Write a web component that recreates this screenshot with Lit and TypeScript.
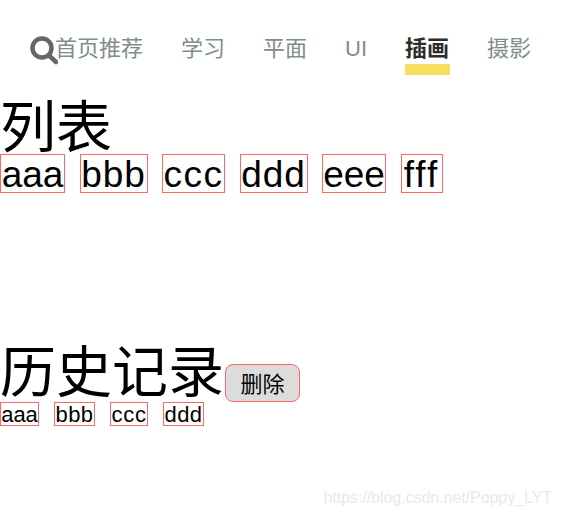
import { LitElement, html, css } from "lit";
import { customElement } from "lit/decorators.js";

const NAV = [
  { t: "首页推荐" },
  { t: "学习" },
  { t: "平面" },
  { t: "UI" },
  { t: "插画", active: true },
  { t: "摄影" },
];
const LIST = ["aaa", "bbb", "ccc", "ddd", "eee", "fff"];
const HIST = ["aaa", "bbb", "ccc", "ddd"];

@customElement("app-root")
export class AppRoot extends LitElement {
  static styles = css`
    :host {
      display: block;
      position: relative;
      width: 562px;
      height: 516px;
      overflow: hidden;
      background: #fff;
      color: #000;
      font-family: "Liberation Sans", "Noto Sans CJK SC", sans-serif;
    }
    .nav {
      display: flex;
      align-items: flex-start;
      padding: 35px 0 0 30px;
      height: 64px;
      box-sizing: border-box;
    }
    .search {
      width: 28px;
      height: 30px;
      flex: none;
      margin-right: -3px;
    }
    .items {
      display: flex;
      gap: 38px;
    }
    .item {
      font-size: 22px;
      line-height: 28px;
      color: #7f8c8d;
      position: relative;
    }
    .item.active {
      color: #2c2c2c;
      font-weight: 700;
    }
    .item.active::after {
      content: "";
      position: absolute;
      left: 0;
      right: -1px;
      top: 29px;
      height: 11px;
      background: #f5df5f;
    }
    h1 {
      margin: 0;
      font-size: 56px;
      font-weight: 400;
    }
    .list-title {
      height: 90px;
      line-height: 52px;
      padding-top: 38px;
      box-sizing: border-box;
    }
    .row {
      display: flex;
    }
    .big .row {
      gap: 14.5px;
    }
    .row.small {
      gap: 15px;
    }
    .box {
      border: 1px solid #f66;
      box-sizing: border-box;
      text-align: center;
      white-space: nowrap;
    }
    .big .box {
      font-size: 37px;
      height: 39px;
      line-height: 39px;
    }
    .list {
      height: 189px;
    }
    .hist-head {
      display: flex;
      align-items: flex-end;
      height: 59px;
    }
    .hist-head h1 {
      line-height: 59px;
      white-space: nowrap;
    }
    button {
      width: 75px;
      height: 38px;
      margin-left: 1px;
      padding: 0 0 3px;
      background: #dcdcdc;
      border: 1px solid #f66;
      border-radius: 8px;
      font: 22px "Noto Sans CJK SC", sans-serif;
      color: #000;
    }
    .small .box {
      font-size: 22px;
      height: 24px;
      line-height: 23px;
    }
    .mark {
      position: absolute;
      right: 10px;
      top: 489px;
      font-size: 16px;
      letter-spacing: -0.05px;
      color: #e9e9e9;
    }
  `;

  render() {
    const bigW: Record<string, number> = { aaa: 65, bbb: 68, ccc: 63, ddd: 68, eee: 64, fff: 42 };
    const smallW: Record<string, number> = { aaa: 39, bbb: 41, ccc: 38, ddd: 41 };
    const ls: Record<string, number> = { ccc: 1.5, eee: 0, fff: 2, bbb: 1, ddd: 1 };
    return html`
      <div class="nav">
        <svg class="search" viewBox="0 0 28 30" aria-hidden="true">
          <circle cx="12" cy="13" r="9.5" fill="none" stroke="#666" stroke-width="4.5"></circle>
          <path d="M19 20.5 L26 27" fill="none" stroke="#666" stroke-width="4.5" stroke-linecap="round"></path>
        </svg>
        <div class="items">
          ${NAV.map(
            (n) => html`<div class="item ${n.active ? "active" : ""}">${n.t}</div>`
          )}
        </div>
      </div>
      <h1 class="list-title">列表</h1>
      <div class="list big">
        <div class="row">
          ${LIST.map(
            (t) =>
              html`<div class="box" style="width:${bigW[t]}px;letter-spacing:${ls[t] ?? 0}px">${t}</div>`
          )}
        </div>
      </div>
      <div class="hist-head">
        <h1>历史记录</h1>
        <button>删除</button>
      </div>
      <div class="row small">
        ${HIST.map(
          (t) =>
            html`<div class="box" style="width:${smallW[t]}px;letter-spacing:${(ls[t] ?? 0) / 2}px">${t}</div>`
        )}
      </div>
      <div class="mark">https://blog.csdn.net/Poppy_LYT</div>
    `;
  }
}
